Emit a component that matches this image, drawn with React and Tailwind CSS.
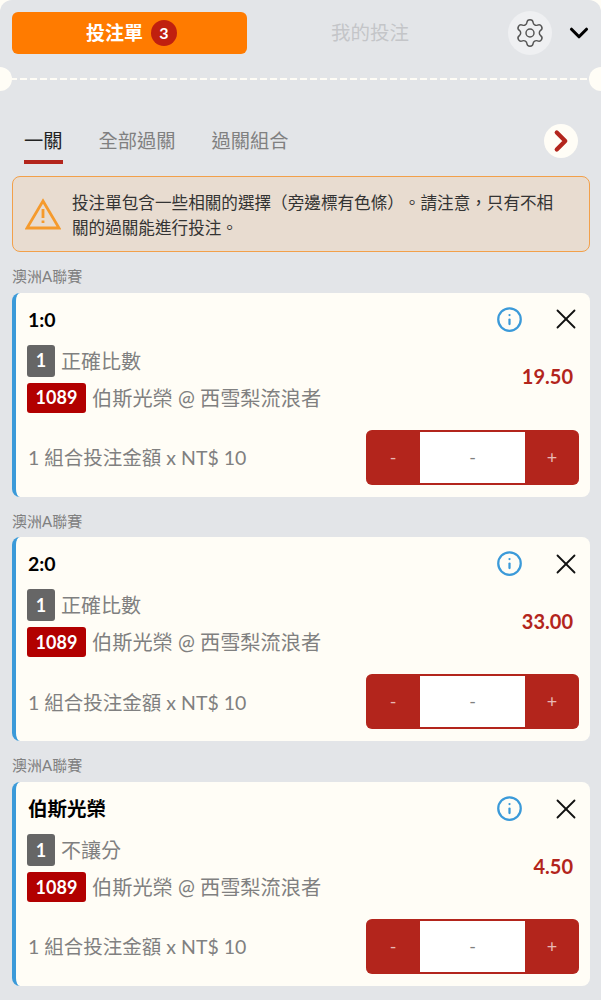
import React from "react";
import { Settings, ChevronDown, ChevronRight, Info, X } from "lucide-react";

const bets = [
  { title: "1:0", type: "正確比數", odds: "19.50" },
  { title: "2:0", type: "正確比數", odds: "33.00" },
  { title: "伯斯光榮", type: "不讓分", odds: "4.50" },
];

const WarningIcon = () => (
  <svg width="36" height="32" viewBox="0 0 36 32" fill="none" className="shrink-0 text-[#f59a2c]">
    <polygon points="18,3 34,30 2,30" stroke="currentColor" strokeWidth="2.8" />
    <path d="M18 11v9" stroke="currentColor" strokeWidth="2.8" />
    <path d="M18 22.5v2.5" stroke="currentColor" strokeWidth="2.8" />
  </svg>
);

const BetCard = ({ title, type, odds }) => (
  <div>
    <div className="h-[40.7px] pl-[12px] pt-[14px] text-[15px] leading-[20px] text-[#808080]">澳洲A聯賽</div>
    <div className="ml-[12px] h-[204px] w-[578px] rounded-[8px] border-l-[4px] border-[#3b9ad9] bg-[#fffdf6] pl-[11px] pr-[11px]">
      <div className="flex h-[52px] items-center justify-between pt-[1px]">
        <span className="ml-[1px] text-[19.5px] font-bold text-black">{title}</span>
        <div className="flex items-center gap-[26px]">
          <Info className="h-[27px] w-[27px] text-[#3b9ad9]" strokeWidth={2} />
          <X className="mr-[-4px] h-[34px] w-[34px] text-[#111111]" strokeWidth={1.3} />
        </div>
      </div>
      <div className="flex items-center justify-between">
        <div>
          <div className="flex h-[32px] items-center gap-[6px]">
            <span className="flex h-[32px] w-[28px] items-center justify-center rounded-[3px] bg-[#666666] text-[18px] font-bold text-white">1</span>
            <span className="text-[20px] leading-[32px] text-[#808080]">{type}</span>
          </div>
          <div className="mt-[6px] flex h-[30px] items-center gap-[6px]">
            <span className="flex h-[30px] w-[59px] items-center justify-center rounded-[3px] bg-[#b20000] text-[18px] font-bold text-white">1089</span>
            <span className="pt-[1px] text-[20.2px] leading-[29px] text-[#808080]">伯斯光榮 @ 西雪梨流浪者</span>
          </div>
        </div>
        <span className="mb-[5px] mr-[6px] text-[20px] font-bold text-[#b3251c]">{odds}</span>
      </div>
      <div className="mt-[17px] flex items-center justify-between">
        <span className="ml-[1px] pt-[1px] text-[19.5px] text-[#808080]">1 組合投注金額 x NT$ 10</span>
        <div className="flex h-[55px] w-[213px] overflow-hidden rounded-[6px] border-y-[2px] border-[#b3251c] bg-[#b3251c] text-[18px] text-[#e8b8b4]">
          <span className="flex w-[54px] items-center justify-center">-</span>
          <span className="flex flex-1 items-center justify-center bg-white text-[#808080]">-</span>
          <span className="flex w-[54px] items-center justify-center">+</span>
        </div>
      </div>
    </div>
  </div>
);

const App = () => {
  return (
    <div className="h-[1000px] w-[601px] overflow-hidden bg-[#fffdf6] font-['Lato','Noto_Sans_CJK_TC',sans-serif]">
      <div className="h-full rounded-t-[12px] bg-[#e3e5e8]">
        <div className="flex h-[66px] items-center pl-[12px] pr-[7px]">
          <div className="flex h-[42px] w-[235px] items-center justify-center gap-[8px] rounded-[6px] bg-[#ff7b00] pl-[4px] text-[19px] font-bold text-white">
            投注單
            <span className="flex h-[26px] w-[26px] items-center justify-center rounded-full bg-[#c0200f] text-[16px]">3</span>
          </div>
          <div className="flex flex-1 justify-center pr-[15px] text-[19.5px] text-[#c4c5c8]">我的投注</div>
          <div className="flex h-[44px] w-[44px] items-center justify-center rounded-full bg-[#eff0f2]">
            <Settings className="h-[32px] w-[32px] text-[#555555]" strokeWidth={1.1} />
          </div>
          <ChevronDown className="ml-[12px] h-[30px] w-[30px] text-black" strokeWidth={2.5} />
        </div>
        <div className="relative mt-[12px] h-[2px] bg-[repeating-linear-gradient(90deg,#fffdf6_0,#fffdf6_7px,transparent_7px,transparent_10px)]">
          <span className="absolute left-[-12px] top-[-11px] h-[24px] w-[24px] rounded-full bg-[#fffdf6]"></span>
          <span className="absolute right-[-12px] top-[-11px] h-[24px] w-[24px] rounded-full bg-[#fffdf6]"></span>
        </div>
        <div className="flex h-[96px] items-start justify-between pl-[24px] pr-[23px] pt-[47px]">
          <div className="flex gap-[36px] text-[19.25px] leading-[28px] text-[#808080]">
            <span className="relative text-[#222222]">
              一關
              <span className="absolute bottom-[-9px] left-0 h-[4px] w-full bg-[#b3251c]"></span>
            </span>
            <span>全部過關</span>
            <span>過關組合</span>
          </div>
          <div className="mt-[-3px] flex h-[34px] w-[34px] items-center justify-center rounded-full bg-[#fffdf6]">
            <ChevronRight className="h-[34px] w-[34px] shrink-0 text-[#b3251c]" strokeWidth={3} />
          </div>
        </div>
        <div className="ml-[12px] flex h-[76px] w-[578px] items-center rounded-[8px] border-[1.5px] border-[#f2a04a] bg-[#e8dcd0] pl-[12px] pr-[20px]">
          <WarningIcon />
          <p className="ml-[11px] pt-[3px] text-[16.6px] leading-[25px] text-[#333333] [text-spacing-trim:space-all]">投注單包含一些相關的選擇（旁邊標有色條）。請注意，只有不相關的過關能進行投注。</p>
        </div>
        <div>
          {bets.map((bet, i) => (
            <BetCard key={i} {...bet} />
          ))}
        </div>
      </div>
    </div>
  );
};

export default App;
